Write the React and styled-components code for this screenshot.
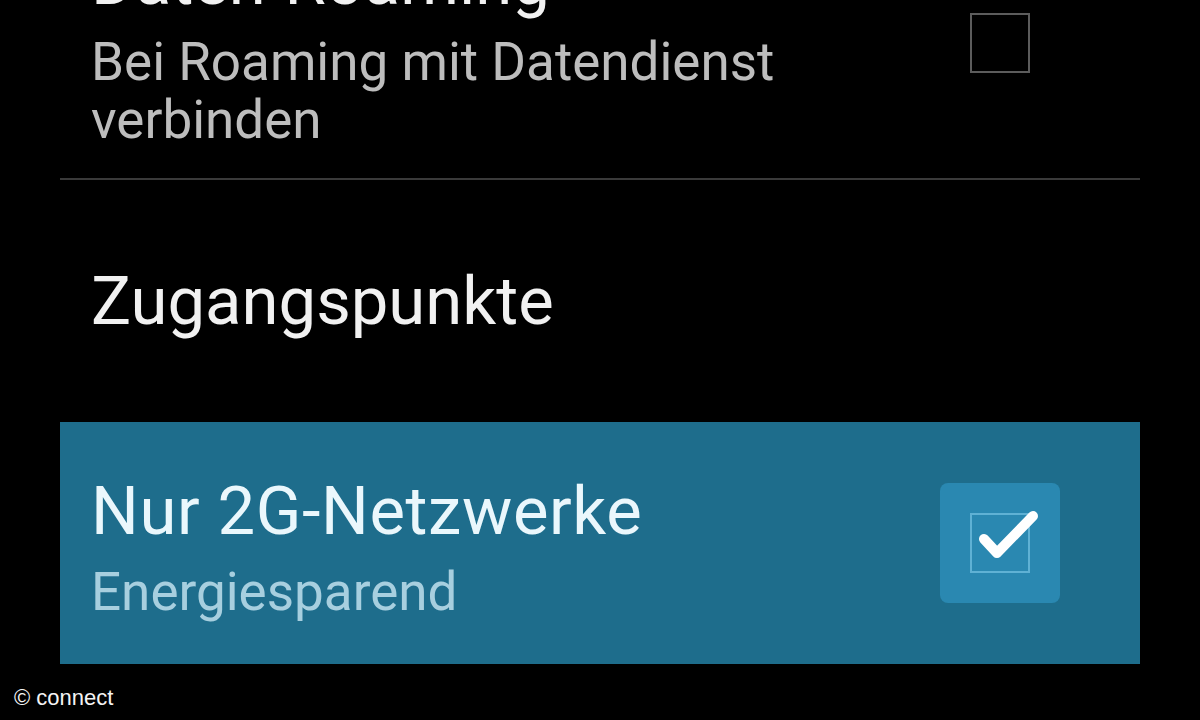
import React from "react";
import styled, { createGlobalStyle } from "styled-components";

const Global = createGlobalStyle`
  html, body {
    margin: 0;
    padding: 0;
    background: #000;
  }
  body {
    width: 1200px;
    height: 720px;
    overflow: hidden;
    font-family: Roboto, "Noto Sans", sans-serif;
  }
`;

const Screen = styled.div`
  position: relative;
  width: 1200px;
  height: 720px;
  overflow: hidden;
  background: #000;
`;

const List = styled.div`
  display: flex;
  flex-direction: column;
  margin: -87px 60px 0;
`;

const Row = styled.div`
  display: flex;
  align-items: center;
  justify-content: space-between;
  box-sizing: border-box;
  min-height: ${(p) => p.$minHeight || 0}px;
  padding: ${(p) => p.$padTop || 0}px 80px ${(p) => p.$padBottom || 0}px 31px;
  background: ${(p) => (p.$active ? "#1e6d8c" : "transparent")};
  border-bottom: ${(p) => (p.$divider ? "2px solid #3a3a3a" : "none")};
`;

const TextBlock = styled.div`
  display: flex;
  flex-direction: column;
`;

const Title = styled.div`
  font-size: 67px;
  line-height: 78px;
  color: ${(p) => (p.$active ? "#eaf7fc" : "#f1f1f1")};
  letter-spacing: ${(p) => (p.$active ? 0.6 : 0)}px;
  white-space: nowrap;
  margin-bottom: ${(p) => (p.$withSummary ? 13 : 0)}px;
`;

const Summary = styled.div`
  font-size: 53px;
  line-height: 58px;
  color: ${(p) => (p.$active ? "#a7cfdf" : "#bdbdbd")};
  max-width: 720px;
`;

const CheckWidget = styled.div`
  flex: 0 0 auto;
  width: 120px;
  height: 120px;
  display: flex;
  align-items: center;
  justify-content: center;
  border-radius: 8px;
  background: ${(p) => (p.$checked ? "#2a88b1" : "transparent")};
  margin-bottom: ${(p) => p.$lift || 0}px;
`;

const Footer = styled.div`
  position: absolute;
  left: 14px;
  bottom: 9px;
  font-family: "Liberation Sans", Arial, sans-serif;
  font-size: 22px;
  color: #f4f4f4;
`;

function CheckBox({ checked, lift }) {
  return (
    <CheckWidget $checked={checked} $lift={lift}>
      <svg width="120" height="120" viewBox="0 0 120 120">
        <rect
          x="31"
          y="31"
          width="58"
          height="58"
          fill="none"
          stroke={checked ? "#5fb1d4" : "#5c5c5c"}
          strokeWidth="2"
        />
        {checked && (
          <path
            d="M44 56 L57 70 L93 33"
            fill="none"
            stroke="#ffffff"
            strokeWidth="10"
            strokeLinejoin="round"
            strokeLinecap="round"
          />
        )}
      </svg>
    </CheckWidget>
  );
}

export default function App() {
  return (
    <Screen>
      <Global />
      <List>
        <Row $padTop={29} $padBottom={29} $divider>
          <TextBlock>
            <Title $withSummary>Daten-Roaming</Title>
            <Summary>Bei Roaming mit Datendienst verbinden</Summary>
          </TextBlock>
          <CheckBox checked={false} lift={6} />
        </Row>
        <Row $minHeight={242}>
          <TextBlock>
            <Title>Zugangspunkte</Title>
          </TextBlock>
        </Row>
        <Row $active $minHeight={242} $padTop={7}>
          <TextBlock>
            <Title $active $withSummary>Nur 2G-Netzwerke</Title>
            <Summary $active>Energiesparend</Summary>
          </TextBlock>
          <CheckBox checked lift={7} />
        </Row>
      </List>
      <Footer>© connect</Footer>
    </Screen>
  );
}
